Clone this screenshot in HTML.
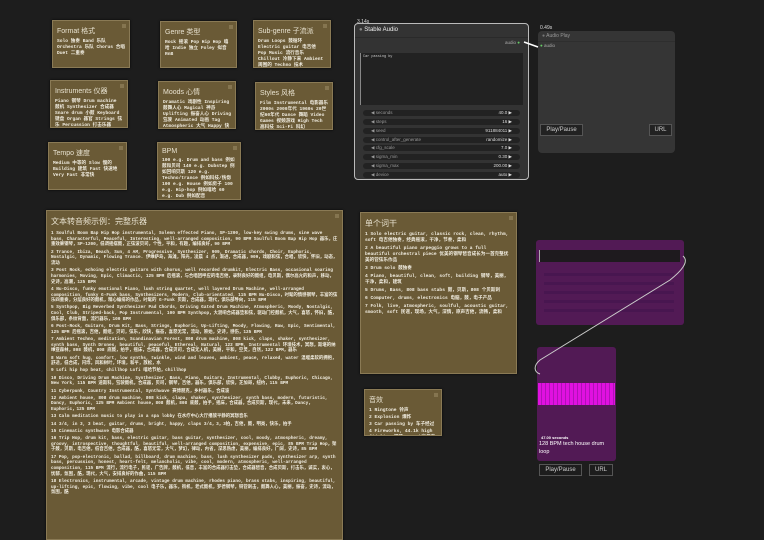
<!DOCTYPE html>
<html><head><meta charset="utf-8"><style>
*{margin:0;padding:0;box-sizing:border-box}
body{width:764px;height:528px;background:#1d1d1d;overflow:hidden;position:relative;font-family:"Liberation Mono","Noto Sans CJK SC",monospace;color:#eee}
.n{position:absolute;background:#6a5a36;border:1px solid #8a7a55;box-shadow:0 0 2px #000;padding:3px 4px;overflow:hidden}
.n h{display:block;font-family:"Liberation Sans","Noto Sans CJK SC",sans-serif;font-size:7px;color:#e8e2d0;margin:2px 0 3px}
.n p{font-size:4.6px;line-height:6px;color:#f2eee2;font-weight:bold}
.n .x{position:absolute;right:3px;top:3px;width:4px;height:4px;background:#857550}
.big p{margin-bottom:1.5px;font-size:4.4px!important;line-height:5.7px!important}
.node{position:absolute;background:#353535;border-radius:4px}
.w{position:absolute;height:6px;background:#222;border-radius:3px;font-family:"Liberation Sans",sans-serif;font-size:4.5px;color:#999;line-height:6px;padding:0 8px}
.w span{float:right;color:#ddd}
.btn{position:absolute;border:1px solid #555;background:#222;color:#ccc;font-family:"Liberation Sans",sans-serif;font-size:6px;text-align:center;line-height:11px;height:12px}
.sans{font-family:"Liberation Sans",sans-serif}
</style></head><body>

<div class="n" style="left:52px;top:20px;width:78px;height:48px"><div class="x"></div><h>Format 格式</h><p>Solo 独奏 Band 乐队 Orchestra 乐队 Chorus 合唱 Duet 二重奏</p></div>
<div class="n" style="left:160px;top:21px;width:77px;height:47px"><div class="x"></div><h>Genre 类型</h><p>Rock 摇滚 Pop Hip Hop 嘻哈 Indie 独立 Foley 拟音 RnB</p></div>
<div class="n" style="left:253px;top:20px;width:78px;height:48px"><div class="x"></div><h>Sub-genre 子流派</h><p>Drum Loops 鼓循环 Electric guitar 电吉他 Pop Music 流行音乐 Chillout 冷静下来 Ambient 周围的 Techno 技术</p></div>
<div class="n" style="left:50px;top:80px;width:78px;height:48px"><div class="x"></div><h>Instruments 仪器</h><p>Piano 钢琴 Drum machine 鼓机 Synthesizer 合成器 Snare drum 小鼓 Keyboard 键盘 Organ 器官 Strings 弦乐 Percussion 打击乐器 Ukulele 尤克里里</p></div>
<div class="n" style="left:158px;top:81px;width:78px;height:48px"><div class="x"></div><h>Moods 心情</h><p>Dramatic 戏剧性 Inspiring 鼓舞人心 Magical 神奇 Uplifting 振奋人心 Driving 驾驶 Animated 动画 Tag Atmospheric 大气 Happy 快乐的</p></div>
<div class="n" style="left:255px;top:82px;width:78px;height:48px"><div class="x"></div><h>Styles 风格</h><p>Film Instrumental 电影器乐 2000s 2000年代 1960s 20世纪60年代 Dance 舞蹈 Video Games 视频游戏 High Tech 高科技 Sci-Fi 科幻</p></div>
<div class="n" style="left:48px;top:142px;width:79px;height:48px"><div class="x"></div><h>Tempo 速度</h><p>Medium 中等的 Slow 慢的 Building 建筑 Fast 快速地 Very Fast 非常快</p></div>
<div class="n" style="left:157px;top:142px;width:84px;height:58px"><div class="x"></div><h>BPM</h><p>100 e.g. Drum and bass 例如鼓和贝司 140 e.g. Dubstep 例如回响贝斯 120 e.g. Techno/trance 例如科技/恍惚 100 e.g. House 例如房子 100 e.g. Hip-hop 例如嘻哈 60 e.g. Dub 例如配音</p></div>

<div class="n big" style="left:46px;top:210px;width:297px;height:330px"><div class="x"></div><h style="font-size:8px;margin-bottom:4px">文本转音频示例：完整乐器</h>
<p>1 Soulful Boom Bap Hip Hop instrumental, Solemn effected Piano, SP-1200, low-key swing drums, sine wave bass, Characterful, Peaceful, Interesting, well-arranged composition, 90 BPM Soulful Boom Bap Hip Hop 器乐，庄重效果钢琴，SP-1200，低调摇摆鼓，正弦波贝司，个性，平和，有趣，编排良好，90 BPM</p>
<p>2 Trance, Ibiza, Beach, Sun, 4 AM, Progressive, Synthesizer, 909, Dramatic chords, Choir, Euphoric, Nostalgic, Dynamic, Flowing Trance. 伊维萨岛，海滩，阳光，凌晨 4 点，渐进，合成器，909，戏剧和弦，合唱，欣快，怀旧，动态，流动</p>
<p>3 Post Rock, echoing electric guitars with chorus, well recorded drumkit, Electric Bass, occasional soaring harmonies, Moving, Epic, Climactic, 125 BPM 后摇滚，与合唱团呼应的电吉他，录制良好的鼓组，电贝斯，偶尔高亢的和声，移动，史诗，高潮，125 BPM</p>
<p>4 Nu-Disco, funky emotional Piano, lush string quartet, well layered Drum Machine, well-arranged composition, funky G-Funk bass, Synthesizers, Modern, Club-orientated, 115 BPM Nu-Disco，时髦的情感钢琴，丰富的弦乐四重奏，分层良好的鼓机，精心编排的作品，时髦的 G-Funk 贝斯，合成器，现代，俱乐部导向，115 BPM</p>
<p>5 Synthpop, Big Reverbed Synthesizer Pad Chords, Driving Gated Drum Machine, Atmospheric, Moody, Nostalgic, Cool, Club, Striped-back, Pop Instrumental, 100 BPM Synthpop，大混响合成器垫和弦，驱动门控鼓机，大气，喜怒，怀旧，酷，俱乐部，条纹背面，流行器乐，100 BPM</p>
<p>6 Post-Rock, Guitars, Drum Kit, Bass, Strings, Euphoric, Up-Lifting, Moody, Flowing, Raw, Epic, Sentimental, 125 BPM 后摇滚，吉他，鼓组，贝司，弦乐，欣快，振奋，喜怒无常，流动，原始，史诗，感伤，125 BPM</p>
<p>7 Ambient Techno, meditation, Scandinavian Forest, 808 drum machine, 808 kick, claps, shaker, synthesizer, synth bass, Synth Drones, beautiful, peaceful, Ethereal, Natural, 122 BPM, Instrumental 环境技术，冥想，斯堪的纳维亚森林，808 鼓机，808 底鼓，拍手，摇床，合成器，合成贝司，合成无人机，美丽，平和，空灵，自然，122 BPM，器乐</p>
<p>8 Warm soft hug, comfort, low synths, twinkle, wind and leaves, ambient, peace, relaxed, water 温暖柔软的拥抱，舒适，低合成，闪烁，风和树叶，环境，和平，放松，水</p>
<p>9 Lofi hip hop beat, chillhop Lofi 嘻哈节拍，chillhop</p>
<p>10 Disco, Driving Drum Machine, Synthesizer, Bass, Piano, Guitars, Instrumental, Clubby, Euphoric, Chicago, New York, 115 BPM 迪斯科，驾驶鼓机，合成器，贝司，钢琴，吉他，器乐，俱乐部，欣快，芝加哥，纽约，115 BPM</p>
<p>11 Cyberpunk, Country Instrumental, Synthwave 赛博朋克，乡村器乐，合成波</p>
<p>12 Ambient house, 808 drum machine, 808 kick, clapa, shaker, synthesizer, synth bass, modern, futuristic, Dancy, Euphoric, 125 BPM Ambient house，808 鼓机，808 底鼓，拍手，摇床，合成器，合成贝斯，现代，未来，Dancy，Euphoric，125 BPM</p>
<p>13 Calm meditation music to play in a spa lobby 在水疗中心大厅播放平静的冥想音乐</p>
<p>14 3/4, in 3, 3 beat, guitar, drums, bright, happy, claps 3/4，3，3拍，吉他，鼓，明亮，快乐，拍手</p>
<p>15 Cinematic synthwave 电影合成器</p>
<p>16 Trip Hop, drum kit, bass, electric guitar, bass guitar, synthesizer, cool, moody, atmospheric, dreamy, groovy, introspective, thoughtful, beautiful, well-arranged composition, expensive, epic, 85 BPM Trip Hop，架子鼓，贝斯，电吉他，低音吉他，合成器，酷，喜怒无常，大气，梦幻，律动，内省，深思熟虑，美丽，编排良好，广阔，史诗，85 BPM</p>
<p>17 Pop, pop-electronic, ballad, billboard, drum machine, bass, lush synthesizer pads, synthesizer arp, synth bass, percussion, honest, heart-felt, melancholic, vibe, cool, modern, atmospheric, well-arranged composition, 115 BPM 流行，流行电子，民谣，广告牌，鼓机，低音，丰富的合成器打击垫，合成器琶音，合成贝斯，打击乐，诚实，衷心，忧郁，氛围，酷，现代，大气，安排良好的作曲，115 BPM</p>
<p>18 Electronics, instrumental, arcade, vintage drum machine, rhodes piano, brass stabs, inspiring, beautiful, up-lifting, epic, flowing, vibe, cool 电子乐，器乐，街机，老式鼓机，罗德钢琴，铜管刺击，鼓舞人心，美丽，振奋，史诗，流动，氛围，酷</p>
</div>

<div class="n" style="left:360px;top:212px;width:157px;height:162px"><div class="x"></div><h style="font-size:8px">单个词干</h>
<p style="margin-bottom:2px">1 Solo electric guitar, classic rock, clean, rhythm, soft 电吉他独奏，经典摇滚，干净，节奏，柔和</p>
<p style="margin-bottom:2px">2 A beautiful piano arpeggio grows to a full beautiful orchestral piece 优美的钢琴琶音成长为一首完整优美的管弦乐作品</p>
<p style="margin-bottom:2px">3 Drum solo 鼓独奏</p>
<p style="margin-bottom:2px">4 Piano, beautiful, clean, soft, building 钢琴，美丽，干净，柔和，建筑</p>
<p style="margin-bottom:2px">5 Drums, Bass, 808 bass stabs 鼓，贝斯，808 个贝斯刺</p>
<p style="margin-bottom:2px">6 Computer, drums, electronics 电脑，鼓，电子产品</p>
<p>7 Folk, live, atmospheric, soulful, acoustic guitar, smooth, soft 民谣，现场，大气，深情，原声吉他，流畅，柔和</p></div>
<div class="n" style="left:364px;top:389px;width:78px;height:47px"><div class="x"></div><h style="font-size:7px">音效</h>
<p style="margin-bottom:1px">1 Ringtone 铃声</p><p style="margin-bottom:1px">2 Explosion 爆炸</p><p style="margin-bottom:1px">3 Car passing by 车子经过</p><p>4 Fireworks, 44.1k high fidelity 烟花，44.1k高保真</p></div>

<!-- Stable Audio -->
<div class="sans" style="position:absolute;left:357px;top:19px;font-size:5px;color:#ddd">3.14s</div>
<div class="node" style="left:354px;top:23px;width:175px;height:157px;border:1px solid #bbb;background:#333">
 <div class="sans" style="position:absolute;left:4px;top:3px;font-size:6px;color:#eee"><span style="color:#888">●</span> Stable Audio</div>
 <div style="position:absolute;left:0;top:13px;right:0;height:1px;background:#2a2a2a"></div>
 <div class="sans" style="position:absolute;right:8px;top:16px;font-size:4.5px;color:#aaa">audio <span style="color:#6c6">●</span></div>
 <div style="position:absolute;left:5px;top:29px;width:163px;height:52px;background:#222;border-left:1px solid #888;font-size:3.5px;color:#ccc;padding:2px">Car passing by</div>
 <div class="w" style="left:8px;top:86px;width:157px">◀ seconds<span>40.0 ▶</span></div>
 <div class="w" style="left:8px;top:95px;width:157px">◀ steps<span>16 ▶</span></div>
 <div class="w" style="left:8px;top:104px;width:157px">◀ seed<span>911884011 ▶</span></div>
 <div class="w" style="left:8px;top:113px;width:157px">◀ control_after_generate<span>randomize ▶</span></div>
 <div class="w" style="left:8px;top:121px;width:157px">◀ cfg_scale<span>7.0 ▶</span></div>
 <div class="w" style="left:8px;top:130px;width:157px">◀ sigma_min<span>0.30 ▶</span></div>
 <div class="w" style="left:8px;top:139px;width:157px">◀ sigma_max<span>200.00 ▶</span></div>
 <div class="w" style="left:8px;top:148px;width:157px">◀ device<span>auto ▶</span></div>
</div>
<!-- Audio Play top -->
<div class="sans" style="position:absolute;left:540px;top:25px;font-size:5px;color:#ddd">0.49s</div>
<div class="node" style="left:538px;top:31px;width:137px;height:122px">
 <div class="sans" style="position:absolute;left:4px;top:2px;font-size:5px;color:#999"><span style="color:#777">●</span> Audio Play</div>
 <div style="position:absolute;left:0;top:10px;right:0;height:1px;background:#2e2e2e"></div>
 <div class="sans" style="position:absolute;left:2px;top:12px;font-size:4.5px;color:#aaa"><span style="color:#6c6">●</span> audio</div>
 <div class="btn" style="left:2px;top:93px;width:43px">Play/Pause</div>
 <div class="btn" style="left:111px;top:93px;width:23px">URL</div>
</div>

<!-- purple nodes -->
<div style="position:absolute;left:536px;top:240px;width:148px;height:85px;background:#521a55;border-radius:3px">
 <div style="position:absolute;left:3px;top:10px;width:141px;height:12px;background:#1e1a1e;border-left:1px solid #aaa"></div>
 <div style="position:absolute;left:8px;top:27px;width:130px;height:50px;background:repeating-linear-gradient(#521a55 0 6px,#481650 6px 9px)"></div>
</div>
<div style="position:absolute;left:537px;top:347px;width:79px;height:114px;background:#521a55;border-radius:3px">
 <div style="position:absolute;left:1px;top:36px;width:77px;height:22px;background:repeating-linear-gradient(90deg,#e011e0 0 3px,#b010b8 3px 4px)"></div>
 <div class="sans" style="position:absolute;left:4px;top:88px;font-size:4px;color:#fff;font-weight:bold">47.00 seconds</div>
 <div class="sans" style="position:absolute;left:2px;top:93px;width:76px;font-size:5.5px;line-height:8px;color:#fff">128 BPM tech house drum loop</div>
</div>
<div class="btn" style="left:539px;top:464px;width:43px;background:#1d1d1d">Play/Pause</div>
<div class="btn" style="left:589px;top:464px;width:24px;background:#1d1d1d">URL</div>

<svg style="position:absolute;left:0;top:0" width="764" height="528">
 <path d="M683,256 C690,262 680,272 670,280 L540,360 C533,366 534,372 540,374" stroke="#ccc" stroke-width="1" fill="none"/>
 <path d="M524,42 L538,47" stroke="#fff" stroke-width="1.5" fill="none"/>
</svg>
</body></html>
